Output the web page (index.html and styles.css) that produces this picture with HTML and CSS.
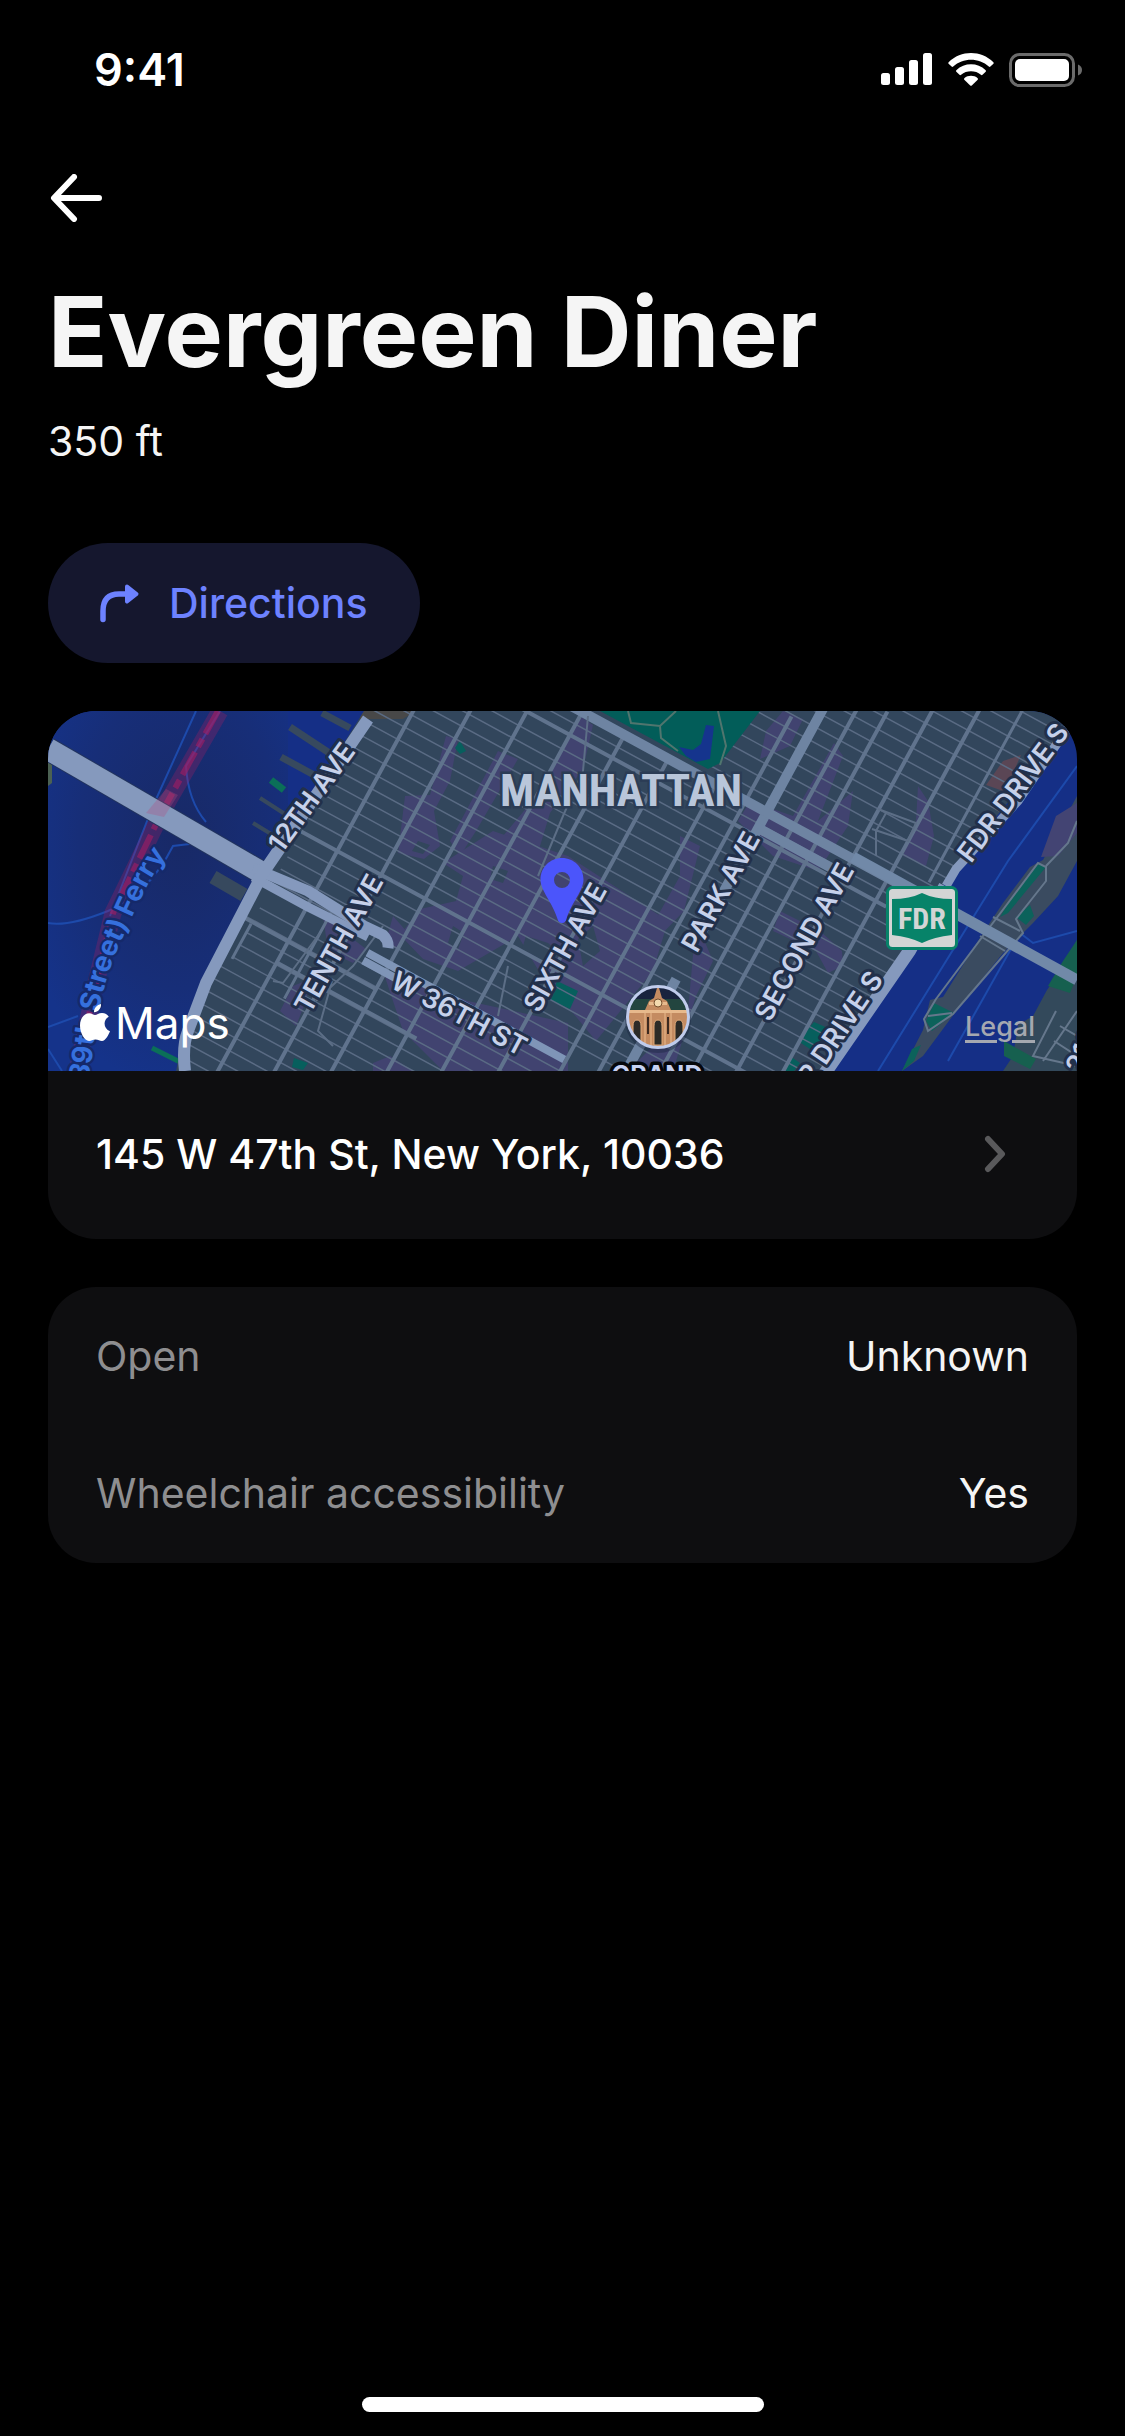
FILE: index.html
```html
<!doctype html>
<html lang="en">
<head>
  <meta charset="utf-8">
  <meta name="viewport" content="width=device-width,initial-scale=1">
  <title>Evergreen Diner</title>
  <link rel="stylesheet" href="styles.css">
</head>
<body>
  <header class="status-bar">
    <time class="clock">9:41</time>
    <div class="status-icons">
      <svg width="52" height="34" viewBox="0 0 52 34" fill="#fff" aria-label="Signal">
        <rect x="0" y="20" width="9" height="12" rx="2.5"/>
        <rect x="14" y="14" width="9" height="18" rx="2.5"/>
        <rect x="28" y="7" width="9" height="25" rx="2.5"/>
        <rect x="42" y="0" width="9" height="32" rx="2.5"/>
      </svg>
      <svg width="46" height="34" viewBox="0 0 46 34" fill="#fff" aria-label="Wi-Fi">
        <path d="M0.6 9.2C13 -3 33 -3 45.400 9.200Q46 10 45.400 10.800L42.400 13.600Q41.600 14.200 40.800 13.500C31 4.500 15 4.500 5.200 13.500Q4.400 14.200 3.600 13.600L.6 10.800Q0 10 .6 9.200Z"/>
        <path d="M8.300 17.200C16.500 9.400 29.500 9.400 37.700 17.200Q38.300 18 37.700 18.700L34.500 21.800Q33.700 22.500 32.900 21.800C27.500 17.200 18.500 17.200 13.100 21.800Q12.300 22.500 11.500 21.800L8.300 18.700Q7.700 18 8.300 17.200Z"/>
        <path d="M16.300 25.200C20 22 26 22 29.700 25.200Q30.300 26 29.700 26.700L23.800 32.500Q23 33.200 22.200 32.500L16.300 26.700Q15.700 26 16.300 25.200Z"/>
      </svg>
      <svg width="74" height="34" viewBox="0 0 74 34" aria-label="Battery">
        <rect x="1.500" y="1.500" width="63" height="31" rx="9" fill="none" stroke="#6b6b6b" stroke-width="3"/>
        <rect x="6" y="6" width="54" height="22" rx="5" fill="#fff"/>
        <path d="M69 11.500Q73 13 73 17T69 22.500Z" fill="#6b6b6b"/>
      </svg>
    </div>
  </header>

  <main class="place">
    <button class="back" type="button" aria-label="Back">
      <svg width="56" height="48" viewBox="0 0 56 48" fill="none" stroke="#fff" stroke-width="6" stroke-linecap="round" stroke-linejoin="round">
        <path d="M51 24H7M26 3L6 24L26 45"/>
      </svg>
    </button>

    <h1>Evergreen Diner</h1>
    <p class="distance">350 ft</p>

    <button class="directions" type="button">
      <svg width="44" height="44" viewBox="0 0 44 44" fill="none" stroke="#6d82ff" stroke-linecap="round" stroke-linejoin="round">
        <path d="M5 38.500V30Q5 13 21 13H30" stroke-width="5.500"/>
        <path d="M29 5.500L38.500 13L29 20.500Z" fill="#6d82ff" stroke-width="4"/>
      </svg>
      Directions
    </button>

    <section class="card">
      <div class="map">
        <svg class="map-art" viewBox="0 0 1029 360" preserveAspectRatio="xMidYMid slice" role="img" aria-label="Map of Manhattan">
          <defs>
            <clipPath id="land">
              <path d="M316 0H1029L1019 19L899 166L862 239L779 360H128L135 326L158 272L215 162Z"/>
            </clipPath>
            <clipPath id="badge"><circle cx="610" cy="306" r="30"/></clipPath>
            <radialGradient id="deep" cx=".55" cy=".35" r=".7">
              <stop offset="0" stop-color="#182966"/>
              <stop offset=".6" stop-color="#172e78"/>
              <stop offset="1" stop-color="#15338a"/>
            </radialGradient>
            <path id="ferry-route" d="M20 460L43 356C48 300 58 262 74 228S100 168 119 144"/>
          </defs>

          <!-- rivers -->
          <rect width="1029" height="360" fill="#152f86"/>
          <rect width="240" height="360" fill="url(#deep)"/>
          <g fill="none" stroke="#1d4aab" stroke-width="2">
            <path d="M148 0L105 95L62 205"/>
            <path d="M172 0L138 55Q140 90 158 111"/>
            <path d="M0 212Q20 216 60 200T125 135L150 132"/>
            <path d="M0 316L30 305M0 338L14 360"/>
            <path d="M1029 55L960 150L830 360M1029 220L985 232L972 222L900 350"/>
          </g>
          <g stroke="#37495e" stroke-width="7">
            <path d="M242 16L292 49M233 46L277 70M274 2L302 17"/>
            <path d="M212 87L240 105M205 112L228 126" stroke-width="4"/>
            <path d="M165 166L196 184" stroke-width="14"/>
            <path d="M223 69L236 79" stroke="#0b6f58"/>
            <path d="M104 337L132 351" stroke="#0b6f58" stroke-width="5"/>
          </g>
          <path d="M0 50H4V72L0 75Z" fill="#4b6152"/>
          <g fill="none" stroke="#a31d62">
            <path d="M172 0L115 99L65 202L48 272L29 360" stroke-width="17" opacity=".3"/>
            <path d="M170 0L115 99L65 202L48 272L29 360" stroke-width="6" stroke-dasharray="26 6 9 6" opacity=".6"/>
          </g>

          <!-- Manhattan -->
          <g clip-path="url(#land)">
            <rect width="1029" height="360" fill="#32465c"/>
            <path d="M310 0H368L355 8H312Z" fill="#484848"/>
            <g fill="#414370">
              <path d="M398 25L410 28L402 70L386 100L392 135L376 148L350 142L357 85L382 84Z"/>
              <path d="M532 5L545 14L535 58L502 102L489 145L460 160L445 137L480 95L514 40Z"/>
              <path d="M450 40L470 48L428 120L412 145L402 130Z"/>
              <path d="M445 120L520 145L620 210L605 260L548 330L492 262L470 225L410 260L375 248L352 224L372 198L408 190L415 165L395 152Z"/>
              <path d="M335 260L420 290L520 312L520 360H395L355 320Z"/>
              <path d="M632 125L652 135L636 200L612 225L604 215L632 165Z"/>
              <path d="M648 210L665 250L648 285L625 360L585 355L640 300Z"/>
              <path d="M275 205L318 238L305 252L280 240ZM245 275L262 268L258 290L248 315L232 300Z"/>
              <path d="M345 205L360 222L350 240L338 230ZM325 352L342 345L365 360H325Z"/>
              <path d="M735 0L755 8L742 35L712 48L718 20ZM786 32L795 45L770 110L805 80L800 115L770 160L725 145L690 110L702 90L745 105Z"/>
              <path d="M870 75L880 90L886 125L878 155L855 145L868 110ZM732 200L772 220L794 240L795 255L780 262L768 240L725 220Z"/>
            </g>
            <path d="M943 67L955 50L973 44L965 62L955 80L938 74Z" fill="#5a4655"/>
            <g fill="#32465c">
              <path d="M478 225L500 232L515 245L495 250L474 238ZM545 215L552 240L535 255L530 228ZM405 215L416 222L410 238L400 232ZM370 130L382 134L375 143L364 140ZM445 155L460 160L455 172L442 168Z"/>
            </g>
            <g fill="#075f5d">
              <path d="M412 30L418 40L412 43L407 37ZM509 270L530 280L522 298L502 289ZM246 347L260 352L255 359L244 356ZM766 311L782 318L765 340L750 330ZM742 345L752 352L746 360H736Z"/>
            </g>
            <g transform="rotate(28.500)">
              <!-- cross streets -->
              <g stroke="#5a6b84" stroke-width="1.500">
                <path d="M150-492H1100M150-478H1100M150-464H1100M150-450H1100M150-436H1100M150-422H1100M150-408H1100M150-394H1100M150-380H1100M150-366H1100M150-352H1100M150-338H1100M150-324H1100M150-310H1100M150-296H1100M150-282H1100M150-268H1100"/>
                <path d="M280-240H900M280-212H900M280-198H900M280-184H900M280-170H900M280-156H900M280-142H900M280-128H900M280-114H900M280-100H900M280-86H900M280-72H900M280-58H900M280-44H900M280-30H900"/>
                <path d="M280 0H900M280 14H900M280 28H900M280 42H900M280 72H900M150 86H900M280 100H900M280 114H900M280 128H900M200 142H900M200 156H900M200 170H900M200 184H900M200 198H900M200 212H900M200 226H900M200 240H900"/>
              </g>
              <!-- avenues -->
              <g stroke="#60738d" stroke-width="4">
                <path d="M321-200V360M371-210V360M421-250V360M470-250V360M518-250V360M568-250V360M622-252V360M656-350V360M710-400V360M738-400V360M777-430V360M818-460V360"/>
                <path d="M856-480V-270M280 90V130M345 40V140" stroke-width="3"/>
                <path d="M230 88H420M200-228H830M280-15H830M320 112H480" stroke-width="4"/>
              </g>
              <g stroke="#6e84a2">
                <path d="M680-400V-120M680-64V90" stroke-width="10"/>
                <path d="M422-254H900M680-236H780" stroke-width="10"/>
                <path d="M396 60H620M396 69H440" stroke-width="8" stroke="#7f95b7"/>
              </g>
            </g>
            <g fill="none" stroke="#5c6e86" stroke-width="2">
              <path d="M540 5L535 60L515 105L490 165M460 255L450 305M284 270L270 320L285 335M335 215L305 255L268 290M225 270L235 272L272 222M830 98L868 112L860 130L824 118M838 102L828 120L828 145"/>
            </g>
            <!-- Central Park -->
            <path d="M552 0L660 58L672 52L712 0Z" fill="#025d59"/>
            <path d="M631 36L645 39L653 33L658 14L666 15L662 48L648 51L638 45Z" fill="#15348d"/>
            <path d="M580 0L583 12L612 15L628 0M612 15L613 27L630 40M670 0L678 35L672 54" fill="none" stroke="#50756e" stroke-width="2"/>
          </g>

          <!-- highways -->
          <g fill="none" stroke="#8599bd" stroke-linejoin="round">
            <path d="M0 38L216 163" stroke="#22345e" stroke-width="24"/>
            <path d="M0 38L216 163" stroke-width="22"/>
            <path d="M205 157L260 180L316 215L335 224Q341 230 340 237" stroke-width="11"/>
            <path d="M205 166L260 196L320 226" stroke-width="9"/>
            <path d="M320 8L215 162L158 272L140 320Q134 335 137 360" stroke-width="12"/>
            <path d="M1023 12L970 90L908 158L898 175" stroke-width="9"/>
            <path d="M897 175L862 239L775 365" stroke-width="13"/>
          </g>
          <path d="M98 102L116 106L130 84L118 78Z" fill="#b34b7d" opacity=".3"/>

          <!-- Roosevelt Island and Queens -->
          <path d="M854 360L875 319L882 289L895 286L935 222L955 192L982 156L995 149L1029 85V150L1010 185L985 212L955 242L909 299L875 345Z" fill="#3a4b60"/>
          <path d="M1008 105L1029 92V122L1010 145L993 146Z" fill="#434473"/>
          <path d="M1029 229L1015 256L999 279L985 305L970 314L965 345L955 360H1029Z" fill="#33495b"/>
          <g fill="#0c625b">
            <path d="M990 153L998 156L960 202L952 206L964 186ZM968 206L982 194L986 205L978 214ZM886 292L906 302L884 320L878 310ZM854 360L864 338L873 334L866 350Z"/>
            <path d="M1029 229L1015 250L1000 275L1022 282L1029 265ZM956 330L988 348L982 358L956 345Z" fill="#16604f"/>
          </g>
          <path d="M888 288L935 225L960 192L990 152L998 156V170L968 208L975 222L955 245L905 303L880 320L876 308ZM880 305L904 302M932 225L957 240M945 206L972 220M998 155L1020 132L1029 110M1008 300L985 345L1029 355M1012 315L1029 325M1006 330L1029 345M1029 300L995 350" fill="none" stroke="#65778c" stroke-width="2"/>
          <path d="M805 146L1029 269" stroke="#7189a8" stroke-width="11"/>

          <g class="road-labels">
            <text transform="translate(234 143) rotate(-54)">12TH AVE</text>
            <text transform="translate(262 304) rotate(-61)">TENTH AVE</text>
            <text transform="translate(341 276) rotate(28)">W 36TH ST</text>
            <text transform="translate(491 303) rotate(-61)">SIXTH AVE</text>
            <text transform="translate(649 243) rotate(-61)">PARK AVE</text>
            <text transform="translate(722 312) rotate(-61)">SECOND AVE</text>
            <text transform="translate(923 153) rotate(-53)">FDR DRIVE S</text>
            <text transform="translate(744 405) rotate(-56)">FDR DRIVE S</text>
            <text transform="translate(1034 364) rotate(-66)">21ST</text>
          </g>
          <text class="ferry-label"><textPath href="#ferry-route" startOffset="100%">(39th Street) Ferry</textPath></text>
          <text class="city-label" x="573" y="95">MANHATTAN</text>

          <!-- route shield -->
          <rect x="839.500" y="176.500" width="69" height="61" rx="5" fill="#d3d5d5" stroke="#078369" stroke-width="3"/>
          <path d="M844 188Q862 188 874 182Q886 188 904 188V224Q886 226 874 232Q862 226 844 224Z" fill="#078369"/>
          <text class="shield-label" x="874" y="218">FDR</text>

          <!-- Grand Central -->
          <circle cx="610" cy="309" r="33" fill="#16243c" opacity=".4"/>
          <g clip-path="url(#badge)">
            <rect x="578" y="274" width="64" height="64" fill="#18233e"/>
            <path d="M578 288H642V300H578Z" fill="#23453f"/>
            <path d="M580 299H597L601 290L606 287L609 277H611L614 287L619 290L623 299H640V340H580Z" fill="#c48b61"/>
            <path d="M580 299H640V302H580ZM601 291H619V294H601Z" fill="#e7b98c"/>
            <circle cx="610" cy="292" r="4" fill="#f3d9ae" stroke="#77502f"/>
            <g fill="#2c2b27" stroke="#dda879">
              <path d="M585 332V315Q585 309 589 309T593 315V332ZM606 334V315Q606 309 610 309T614 315V334ZM627 332V315Q627 309 631 309T635 315V332Z"/>
            </g>
            <path d="M599 306H601V323H599ZM619 306H621V323H619Z" fill="#3d2a20"/>
            <path d="M597 302V338M603 302V338M617 302V338M623 302V338" stroke="#eabb8f"/>
          </g>
          <circle cx="610" cy="306" r="30.500" fill="none" stroke="#c0ccec" stroke-width="3"/>
          <text class="station-label" x="609" y="373">GRAND</text>

          <!-- place marker -->
          <path fill="#4b55fb" fill-rule="evenodd" d="M514 147C526 147 535.500 156.500 535.500 168.500C535.500 180 523 192 518.500 208Q517.500 212 514 212T509.500 208C505 192 492.500 180 492.500 168.500C492.500 156.500 502 147 514 147ZM514 161A8 8 0 1 0 514 177A8 8 0 1 0 514 161Z"/>
        </svg>
        <div class="map-brand">
          <svg width="30" height="38" viewBox="0 0 30 38" fill="#fff" aria-hidden="true">
            <path d="M21 0C21.500 4 18 8.500 14 8.300C13.600 4.500 17 .7 21 0Z"/>
            <path d="M15 11C17 11 18.500 9 22 9C25 9 27.500 10.500 28.800 12.700C22.500 16 23.500 25 30 27.300C28.500 31 25.500 37 22 37C19.500 37 18.500 35.500 15.500 35.500S11.500 37 9 37C4.500 37 0 28.500 0 21.500C0 14 4.500 9.200 9.200 9.200C12 9.200 13.500 11 15 11Z"/>
          </svg>
          Maps
        </div>
        <a class="legal" href="#legal">Legal</a>
      </div>
      <a class="address" href="#address">
        <span>145 W 47th St, New York, 10036</span>
        <svg width="24" height="40" viewBox="0 0 24 40" fill="none" stroke="#59595b" stroke-width="6" stroke-linecap="round" stroke-linejoin="round" aria-hidden="true">
          <path d="M4 5L18 20L4 35"/>
        </svg>
      </a>
    </section>

    <dl class="card details">
      <div class="row">
        <dt>Open</dt>
        <dd>Unknown</dd>
      </div>
      <div class="row">
        <dt>Wheelchair accessibility</dt>
        <dd>Yes</dd>
      </div>
    </dl>
  </main>

  <div class="home-indicator"></div>
</body>
</html>
```
FILE: styles.css
```css
:root{ --bg:#000; --card:#0e0e10; --text:#f5f5f5; --muted:#8e8e90; --accent:#6d82ff; --accent-bg:#15172e; --gap:48px; }
*{ box-sizing:border-box; }
body{ background:var(--bg); color:var(--text); font-family:Inter,"Liberation Sans",sans-serif; font-size:41px; line-height:52px; margin:0; min-height:100vh; display:flex; flex-direction:column; }
button{ font:inherit; border:none; cursor:pointer; }
a{ color:inherit; text-decoration:none; }
svg{ display:block; flex:none; }

.status-bar{ display:flex; align-items:center; justify-content:space-between; height:140px; padding:0 42px 0 94px; color:#fff; }
.clock{ font-size:45px; font-weight:600; }
.status-icons{ display:flex; align-items:center; gap:15px; }

.place{ flex:1; display:flex; flex-direction:column; align-items:stretch; padding:34px var(--gap) 0; }
.back{ align-self:flex-start; background:none; padding:0; }
h1{ margin:56px 0 0; font-size:98px; line-height:108px; font-weight:700; }
.distance{ margin:29px 0 0; }
.directions{ align-self:flex-start; display:flex; align-items:center; gap:27px; height:120px; margin-top:76px; padding:0 52px 0 50px; border-radius:60px; background:var(--accent-bg); color:var(--accent); font-weight:500; }

.card{ margin:var(--gap) 0 0; background:var(--card); border-radius:48px; overflow:hidden; }
.map{ position:relative; height:360px; }
.map-art{ width:100%; height:100%; }
.road-labels text{ font-size:27px; font-weight:600; fill:#c6d1ea; stroke:#22304a; stroke-width:6px; stroke-linejoin:round; paint-order:stroke; }
.ferry-label{ font-size:28px; font-weight:700; fill:#3570dd; stroke:#15296a; stroke-width:5px; stroke-linejoin:round; paint-order:stroke; text-anchor:end; }
.city-label{ font-family:"Roboto Condensed",Roboto,sans-serif; font-size:45px; font-weight:700; fill:#b9c6da; stroke:#2b3c55; stroke-width:5px; paint-order:stroke; text-anchor:middle; }
.shield-label{ font-family:"Roboto Condensed",Roboto,sans-serif; font-size:30px; font-weight:700; fill:#d3d5d5; text-anchor:middle; }
.station-label{ font-size:25px; font-weight:700; fill:#c6d1f2; stroke:#05070c; stroke-width:7px; stroke-linejoin:round; paint-order:stroke; text-anchor:middle; }
.map-brand{ position:absolute; left:32px; bottom:22px; display:flex; align-items:center; gap:5px; color:#fff; font-size:44px; }
.legal{ position:absolute; right:42px; bottom:28px; font-size:27px; line-height:32px; font-weight:500; color:#a5a8b0; text-decoration:underline 3px; text-underline-offset:4px; }
.address{ display:flex; align-items:center; justify-content:space-between; height:168px; padding:0 69px 2px var(--gap); color:#fff; font-weight:500; }

.details{ padding:0 0 2px; }
.row{ display:flex; align-items:center; justify-content:space-between; height:137px; padding:0 var(--gap); }
.row dt{ color:var(--muted); }
.row dd{ margin:0; }

.home-indicator{ align-self:center; width:402px; height:15px; margin-bottom:24px; border-radius:8px; background:#fff; }
```
